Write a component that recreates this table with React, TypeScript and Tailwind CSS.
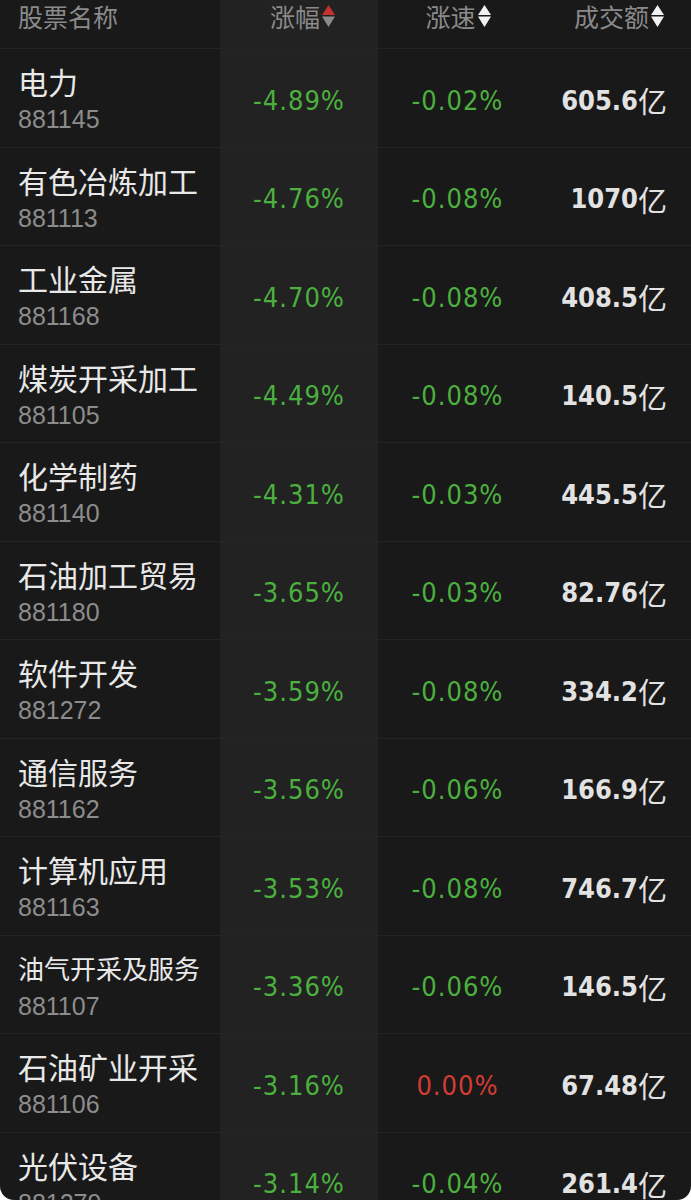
import React from "react";

type Row = { name: string; code: string; chg: string; speed: string; amt: string };

const rows: Row[] = [
  { name: "电力", code: "881145", chg: "-4.89%", speed: "-0.02%", amt: "605.6" },
  { name: "有色冶炼加工", code: "881113", chg: "-4.76%", speed: "-0.08%", amt: "1070" },
  { name: "工业金属", code: "881168", chg: "-4.70%", speed: "-0.08%", amt: "408.5" },
  { name: "煤炭开采加工", code: "881105", chg: "-4.49%", speed: "-0.08%", amt: "140.5" },
  { name: "化学制药", code: "881140", chg: "-4.31%", speed: "-0.03%", amt: "445.5" },
  { name: "石油加工贸易", code: "881180", chg: "-3.65%", speed: "-0.03%", amt: "82.76" },
  { name: "软件开发", code: "881272", chg: "-3.59%", speed: "-0.08%", amt: "334.2" },
  { name: "通信服务", code: "881162", chg: "-3.56%", speed: "-0.06%", amt: "166.9" },
  { name: "计算机应用", code: "881163", chg: "-3.53%", speed: "-0.08%", amt: "746.7" },
  { name: "油气开采及服务", code: "881107", chg: "-3.36%", speed: "-0.06%", amt: "146.5" },
  { name: "石油矿业开采", code: "881106", chg: "-3.16%", speed: "0.00%", amt: "67.48" },
  { name: "光伏设备", code: "881279", chg: "-3.14%", speed: "-0.04%", amt: "261.4" },
];

const cjk = { fontFamily: '"Noto Sans CJK SC", "Noto Sans", sans-serif' };
const code = { fontFamily: '"Liberation Sans", "Noto Sans CJK SC", sans-serif' };
const din = { fontFamily: '"DejaVu Sans Condensed", "DejaVu Sans", sans-serif', fontStretch: "condensed" as const };

function SortIcon({ up, down }: { up: string; down: string }) {
  return (
    <svg width="15" height="24" viewBox="0 0 15 24" className="ml-[1px]">
      <polygon points="7.5,1 14,11 1,11" fill={up} />
      <polygon points="1,12.5 14,12.5 7.5,23" fill={down} />
    </svg>
  );
}

export default function App() {
  return (
    <div className="w-[691px] h-[1200px] bg-white">
      <div className="w-[691px] h-[1200px] bg-[#191919] rounded-b-[14px] overflow-hidden">
        {/* header */}
        <div className="flex h-[49px] border-b border-[#242424]" style={cjk}>
          <div className="w-[220px] pl-[18px] flex items-start pt-[1px] text-[25px] leading-[30px] text-[#8a8a8a]">股票名称</div>
          <div className="w-[158px] bg-[#222222] flex items-start justify-center pt-[1px] text-[25px] leading-[30px] text-[#8a8a8a]">
            <span className="pl-[8px]">涨幅</span>
            <span className="mt-[3px]"><SortIcon up="#c5312c" down="#8a8a8a" /></span>
          </div>
          <div className="w-[159px] flex items-start justify-center pt-[1px] text-[25px] leading-[30px] text-[#8a8a8a]">
            <span className="pl-[2px]">涨速</span>
            <span className="mt-[3px]"><SortIcon up="#f2f2f2" down="#f2f2f2" /></span>
          </div>
          <div className="flex-1 flex items-start justify-end pr-[26px] pt-[1px] text-[25px] leading-[30px] text-[#8a8a8a]">
            <span>成交额</span>
            <span className="mt-[3px]"><SortIcon up="#f2f2f2" down="#f2f2f2" /></span>
          </div>
        </div>
        {rows.map((r, i) => (
          <div key={i} className="flex h-[98.5px] border-b border-[#242424]">
            <div className="w-[220px] pl-[18px] pt-[14px] flex flex-col">
              <div
                className={`${r.name.length > 6 ? "text-[26px]" : "text-[30px]"} leading-[36px] h-[36px] text-[#e8e8e8] whitespace-nowrap flex items-center`}
                style={cjk}
              >
                {r.name}
              </div>
              <div className="text-[25px] leading-[30px] mt-[5px] text-[#8c8c8c]" style={code}>
                {r.code}
              </div>
            </div>
            <div className="w-[158px] bg-[#222222] flex items-center justify-center pt-[6px]">
              <span className="text-[27px] tracking-[1px] text-[#4bb03e]" style={din}>{r.chg}</span>
            </div>
            <div className="w-[159px] flex items-center justify-center pt-[6px]">
              <span
                className={`text-[27px] tracking-[1px] ${r.speed === "0.00%" ? "text-[#d43b33]" : "text-[#4bb03e]"}`}
                style={din}
              >
                {r.speed}
              </span>
            </div>
            <div className="flex-1 flex items-center justify-end pr-[24px] pt-[6px]">
              <span className="text-[27px] font-semibold text-[#e2e2e2]" style={din}>{r.amt}</span>
              <span className="text-[29px] text-[#e2e2e2]" style={cjk}>亿</span>
            </div>
          </div>
        ))}
      </div>
    </div>
  );
}
